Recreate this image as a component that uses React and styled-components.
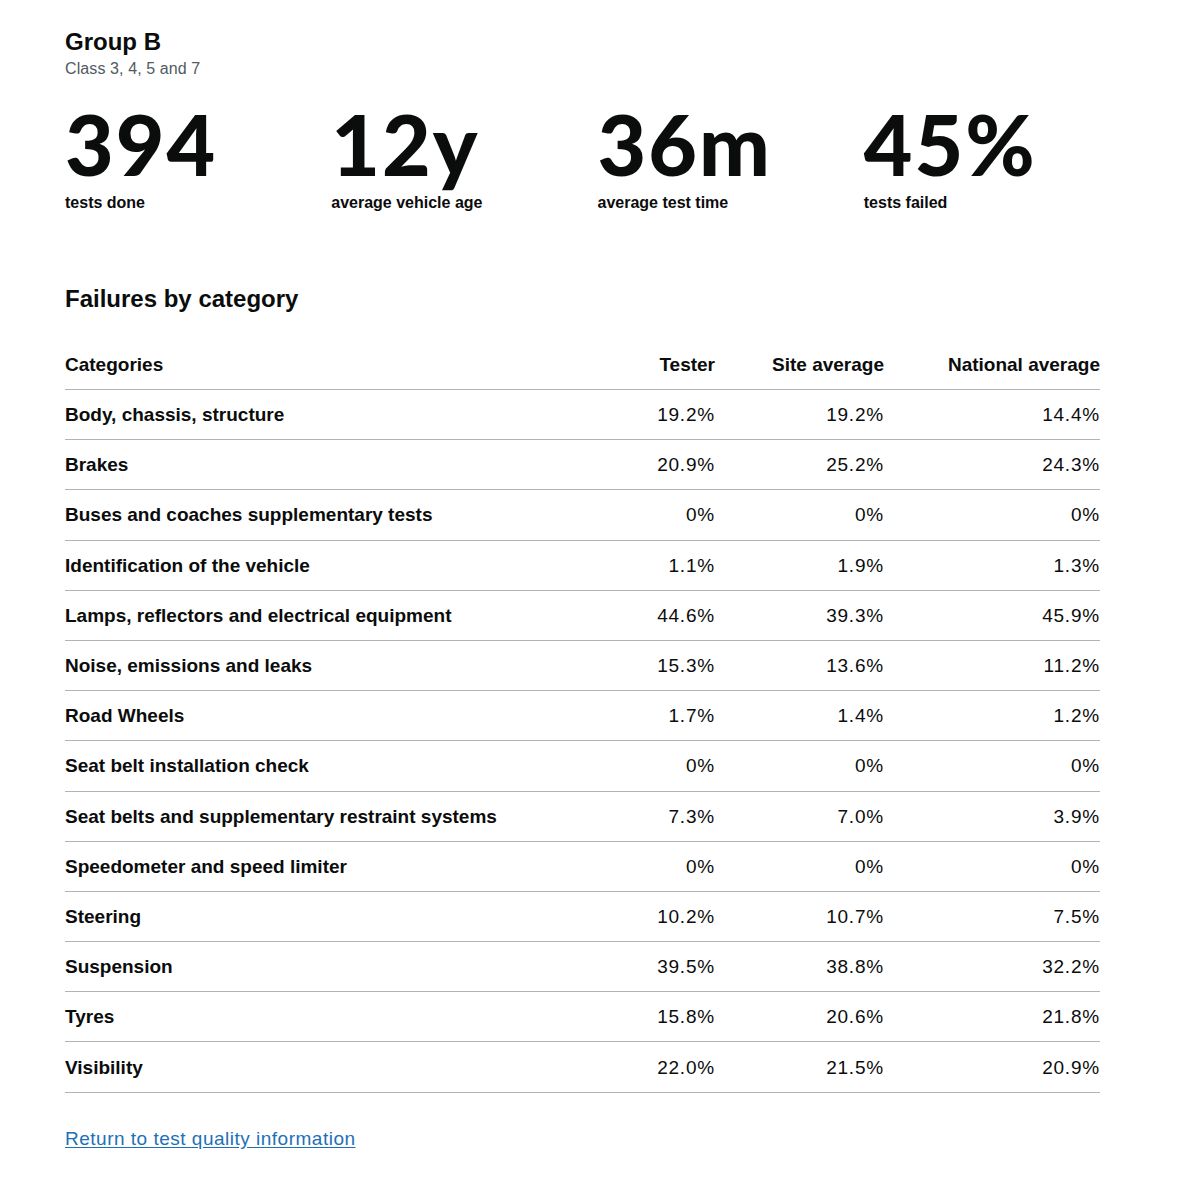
import React from "react";
import styled, { createGlobalStyle } from "styled-components";

const Global = createGlobalStyle`
  html, body { margin: 0; padding: 0; background: #fff; }
  body { font-family: "Liberation Sans", Arial, sans-serif; color: #0b0c0c; }
`;

const Page = styled.main`
  padding: 27px 50px 40px;
  box-sizing: border-box;
  width: 1200px;
`;

const Inner = styled.div`
  padding: 0 15px;
  width: 1035px;
`;

const Title = styled.h1`
  margin: 0;
  font-size: 24px;
  line-height: 30px;
  font-weight: 700;
`;

const Caption = styled.p`
  margin: 2px 0 0;
  font-size: 16px;
  line-height: 20px;
  color: #505a5f;
  letter-spacing: 0.1px;
`;

const Stats = styled.div`
  display: grid;
  grid-template-columns: repeat(4, 1fr);
  margin: 23px -15px 0;
`;

const Stat = styled.div`
  padding: 0 15px;
  display: flex;
  flex-direction: column;
`;

const BigNumber = styled.span`
  font-family: Lato, "Liberation Sans", Arial, sans-serif;
  font-size: 84px;
  line-height: 84px;
  font-weight: 900;
  letter-spacing: 2px;
`;

const StatLabel = styled.span`
  margin-top: 7px;
  font-size: 16px;
  line-height: 20px;
  font-weight: 700;
`;

const SectionTitle = styled.h2`
  margin: 71px 0 0;
  font-size: 24px;
  line-height: 30px;
  font-weight: 700;
`;

const Table = styled.table`
  margin-top: 28px;
  width: 100%;
  border-collapse: collapse;
  table-layout: fixed;
  font-size: 19px;
  line-height: 25px;
`;

const Th = styled.th`
  text-align: ${(p) => (p.$num ? "right" : "left")};
  font-weight: 700;
  padding: 10px ${(p) => (p.$last ? 0 : 20)}px 12px 0;
  border-bottom: 1px solid #b1b4b6;
`;

const Td = styled.td`
  text-align: ${(p) => (p.$num ? "right" : "left")};
  font-weight: ${(p) => (p.$num ? 400 : 700)};
  font-variant-numeric: tabular-nums;
  letter-spacing: ${(p) => (p.$num ? "0.8px" : "0")};
  padding: 12.1px ${(p) => (p.$last ? 0 : 20)}px 12.1px 0;
  border-bottom: 1px solid #b1b4b6;
`;

const BackLink = styled.a`
  display: inline-block;
  margin-top: 33px;
  font-size: 19px;
  line-height: 25px;
  color: #1d70b8;
  letter-spacing: 0.5px;
  text-decoration: underline;
  text-underline-offset: 2px;
`;

const stats = [
  ["394", "tests done"],
  ["12y", "average vehicle age"],
  ["36m", "average test time"],
  ["45%", "tests failed"],
];

const rows = [
  ["Body, chassis, structure", "19.2%", "19.2%", "14.4%"],
  ["Brakes", "20.9%", "25.2%", "24.3%"],
  ["Buses and coaches supplementary tests", "0%", "0%", "0%"],
  ["Identification of the vehicle", "1.1%", "1.9%", "1.3%"],
  ["Lamps, reflectors and electrical equipment", "44.6%", "39.3%", "45.9%"],
  ["Noise, emissions and leaks", "15.3%", "13.6%", "11.2%"],
  ["Road Wheels", "1.7%", "1.4%", "1.2%"],
  ["Seat belt installation check", "0%", "0%", "0%"],
  ["Seat belts and supplementary restraint systems", "7.3%", "7.0%", "3.9%"],
  ["Speedometer and speed limiter", "0%", "0%", "0%"],
  ["Steering", "10.2%", "10.7%", "7.5%"],
  ["Suspension", "39.5%", "38.8%", "32.2%"],
  ["Tyres", "15.8%", "20.6%", "21.8%"],
  ["Visibility", "22.0%", "21.5%", "20.9%"],
];

export default function App() {
  return (
    <Page>
      <Global />
      <Inner>
        <Title>Group B</Title>
        <Caption>Class 3, 4, 5 and 7</Caption>
        <Stats>
          {stats.map(([n, l]) => (
            <Stat key={l}>
              <BigNumber>{n}</BigNumber>
              <StatLabel>{l}</StatLabel>
            </Stat>
          ))}
        </Stats>
        <SectionTitle>Failures by category</SectionTitle>
        <Table>
          <colgroup>
            <col style={{ width: "570px" }} />
            <col style={{ width: "100px" }} />
            <col style={{ width: "169px" }} />
            <col style={{ width: "196px" }} />
          </colgroup>
          <thead>
            <tr>
              <Th>Categories</Th>
              <Th $num>Tester</Th>
              <Th $num>Site average</Th>
              <Th $num $last>National average</Th>
            </tr>
          </thead>
          <tbody>
            {rows.map(([c, a, b, d]) => (
              <tr key={c}>
                <Td>{c}</Td>
                <Td $num>{a}</Td>
                <Td $num>{b}</Td>
                <Td $num $last>{d}</Td>
              </tr>
            ))}
          </tbody>
        </Table>
        <BackLink href="#">Return to test quality information</BackLink>
      </Inner>
    </Page>
  );
}
